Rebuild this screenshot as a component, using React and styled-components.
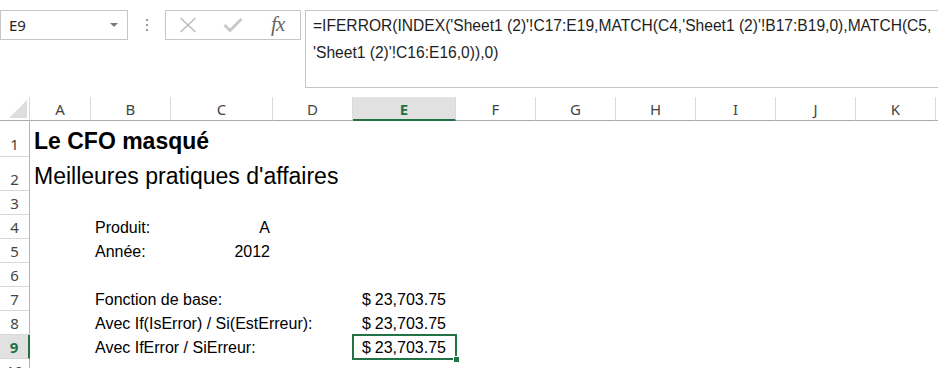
import React from 'react';
import styled, { createGlobalStyle } from 'styled-components';

const GlobalStyle = createGlobalStyle`
    body {
        margin: 0;
        background: #fff;
        overflow: hidden;
    }
`;

const COLS = '30px 61px 80px 102px 80px 103px 80px 80px 80px 80px 80px 80px 80px';
const GREEN = '#217346';

const Page = styled.div`
    width: 938px;
    height: 368px;
    overflow: hidden;
    background: #fff;
`;

const FormulaBar = styled.div`
    display: flex;
    align-items: flex-start;
    height: 97px;
    padding-top: 10px;
    box-sizing: border-box;
`;

const NameBox = styled.div`
    width: 128px;
    height: 30px;
    box-sizing: border-box;
    border: 1px solid #c6c6c6;
    display: flex;
    align-items: center;
    justify-content: space-between;
    padding: 0 9px 0 8px;
    font: 15px 'Noto Sans', sans-serif;
    color: #262626;
`;

const Arrow = styled.span`
    width: 0;
    height: 0;
    border-left: 4px solid transparent;
    border-right: 4px solid transparent;
    border-top: 4px solid #7a7a7a;
`;

const Splitter = styled.div`
    width: 37px;
    height: 30px;
    display: flex;
    flex-direction: column;
    align-items: center;
    justify-content: center;
    gap: 3px;
`;

const Dot = styled.span`
    width: 2px;
    height: 2px;
    background: #9c9c9c;
`;

const Buttons = styled.div`
    width: 136px;
    height: 30px;
    box-sizing: border-box;
    border: 1px solid #c6c6c6;
    display: flex;
    align-items: center;
`;

const IconSlot = styled.div`
    width: 45px;
    height: 28px;
    display: flex;
    align-items: center;
    justify-content: center;
`;

const Fx = styled.span`
    font: italic 21px 'Liberation Serif', serif;
    color: #666;
    letter-spacing: -1px;
    margin-top: -2px;
`;

const FormulaBox = styled.div`
    flex: 1;
    margin-left: 4px;
    margin-right: -20px;
    height: 78px;
    box-sizing: border-box;
    border: 1px solid #c6c6c6;
    padding: 1px 7px 0;
    font: 15.6px 'Liberation Sans', Arial, sans-serif;
    line-height: 27px;
    color: #1e1e1e;
    white-space: nowrap;
`;

const Row = styled.div`
    display: grid;
    grid-template-columns: ${COLS};
    height: ${({ $h }) => $h}px;
`;

const Corner = styled.div`
    border-right: 1px solid #dadada;
    border-bottom: 1px solid #ababab;
    display: flex;
    align-items: flex-end;
    justify-content: flex-end;
    padding: 0 2px 2px 0;
`;

const ColHeader = styled.div`
    border-right: 1px solid #dadada;
    border-bottom: ${({ $active }) => ($active ? `2px solid ${GREEN}` : '1px solid #ababab')};
    background: ${({ $active }) => ($active ? '#e1e1e1' : '#fff')};
    color: ${({ $active }) => ($active ? GREEN : '#444')};
    font: ${({ $active }) => ($active ? 700 : 400)} 15px 'Noto Sans', sans-serif;
    display: flex;
    align-items: center;
    justify-content: center;
    padding-top: ${({ $active }) => ($active ? 1 : 0)}px;
`;

const RowHeader = styled.div`
    border-bottom: 1px solid #d8d8d8;
    border-right: ${({ $active }) => ($active ? `2px solid ${GREEN}` : '1px solid #b4b4b4')};
    background: ${({ $active }) => ($active ? '#e1e1e1' : '#fff')};
    color: ${({ $active }) => ($active ? GREEN : '#444')};
    font: ${({ $active }) => ($active ? 700 : 400)} 15px 'Noto Sans', sans-serif;
    line-height: 18px;
    display: flex;
    align-items: flex-end;
    justify-content: center;
    padding-bottom: ${({ $pb }) => $pb}px;
    box-sizing: border-box;
`;

const Cell = styled.div`
    position: relative;
    display: flex;
    align-items: flex-end;
    justify-content: ${({ $align }) => ($align === 'right' ? 'flex-end' : 'flex-start')};
    padding: 0 3px ${({ $pb }) => $pb}px 4px;
    font: ${({ $bold }) => ($bold ? 700 : 400)} ${({ $size }) => $size}px 'Liberation Sans', Arial, sans-serif;
    line-height: ${({ $size }) => ($size > 18 ? 26 : 18)}px;
    color: #000;
    white-space: nowrap;
    z-index: ${({ $selected }) => ($selected ? 2 : 1)};
    &::after {
        content: '';
        display: ${({ $selected }) => ($selected ? 'block' : 'none')};
        position: absolute;
        inset: -1px;
        border: 2px solid ${GREEN};
    }
    &::before {
        content: '';
        display: ${({ $selected }) => ($selected ? 'block' : 'none')};
        position: absolute;
        right: -3px;
        bottom: -3px;
        width: 5px;
        height: 5px;
        background: ${GREEN};
        border-left: 1px solid #fff;
        border-top: 1px solid #fff;
        z-index: 3;
    }
`;

const Money = styled.div`
    flex: 1;
    display: flex;
    justify-content: space-between;
    padding: 0 7px 0 5px;
`;

// L is only a sliver at the right edge, so it gets no letter
const letters = ['A', 'B', 'C', 'D', 'E', 'F', 'G', 'H', 'I', 'J', 'K', ''];

const rows = [
    { n: 1, h: 36, pb: 3, cells: { A: { text: 'Le CFO masqué', bold: true, size: 23 } } },
    { n: 2, h: 34, pb: 2, cells: { A: { text: "Meilleures pratiques d'affaires", size: 23 } } },
    { n: 3, h: 24, pb: 2, cells: {} },
    { n: 4, h: 24, pb: 2, cells: { B: { text: 'Produit:' }, C: { text: 'A', align: 'right' } } },
    { n: 5, h: 24, pb: 2, cells: { B: { text: 'Année:' }, C: { text: '2012', align: 'right' } } },
    { n: 6, h: 24, pb: 2, cells: {} },
    { n: 7, h: 24, pb: 2, cells: { B: { text: 'Fonction de base:' }, E: { money: '23,703.75' } } },
    { n: 8, h: 24, pb: 2, cells: { B: { text: 'Avec If(IsError) / Si(EstErreur):' }, E: { money: '23,703.75' } } },
    { n: 9, h: 24, pb: 2, cells: { B: { text: 'Avec IfError / SiErreur:' }, E: { money: '23,703.75', selected: true } } },
    { n: 10, h: 24, pb: 2, cells: {} },
];

const XIcon = () => (
    <svg width="18" height="16" viewBox="0 0 18 16">
        <path d="M1.5 1 L16.5 15 M16.5 1 L1.5 15" stroke="#bdbdbd" strokeWidth="1.6" fill="none" />
    </svg>
);

const CheckIcon = () => (
    <svg width="20" height="16" viewBox="0 0 20 16">
        <path d="M1.5 8 L7 13.5 L18.5 2" stroke="#c9c9c9" strokeWidth="3" fill="none" />
    </svg>
);

const CornerTriangle = () => (
    <svg width="18" height="18" viewBox="0 0 18 18">
        <polygon points="0,18 18,18 18,0" fill="#dedede" />
    </svg>
);

export default function App() {
    return (
        <Page>
            <GlobalStyle />
            <FormulaBar>
                <NameBox>
                    <span>E9</span>
                    <Arrow />
                </NameBox>
                <Splitter>
                    <Dot />
                    <Dot />
                    <Dot />
                </Splitter>
                <Buttons>
                    <IconSlot><XIcon /></IconSlot>
                    <IconSlot><CheckIcon /></IconSlot>
                    <IconSlot><Fx>fx</Fx></IconSlot>
                </Buttons>
                <FormulaBox>
                    =IFERROR(INDEX('Sheet1 (2)'!C17:E19,MATCH(C4,'Sheet1 (2)'!B17:B19,0),MATCH(C5,
                    <br />
                    'Sheet1 (2)'!C16:E16,0)),0)
                </FormulaBox>
            </FormulaBar>

            <Row $h={24}>
                <Corner><CornerTriangle /></Corner>
                {letters.map((l, i) => (
                    <ColHeader key={i} $active={l === 'E'}>{l}</ColHeader>
                ))}
            </Row>

            {rows.map(row => (
                <Row key={row.n} $h={row.h}>
                    <RowHeader $active={row.n === 9} $pb={row.pb}>{row.n}</RowHeader>
                    {letters.map((l, i) => {
                        const c = row.cells[l];
                        if (!c) return <Cell key={i} $size={16} $pb={row.pb} />;
                        return (
                            <Cell
                                key={i}
                                $align={c.align}
                                $bold={c.bold}
                                $size={c.size || 16}
                                $pb={row.pb}
                                $selected={c.selected}
                            >
                                {c.money ? (
                                    <Money>
                                        <span>$</span>
                                        <span>{c.money}</span>
                                    </Money>
                                ) : (
                                    c.text
                                )}
                            </Cell>
                        );
                    })}
                </Row>
            ))}
        </Page>
    );
}
